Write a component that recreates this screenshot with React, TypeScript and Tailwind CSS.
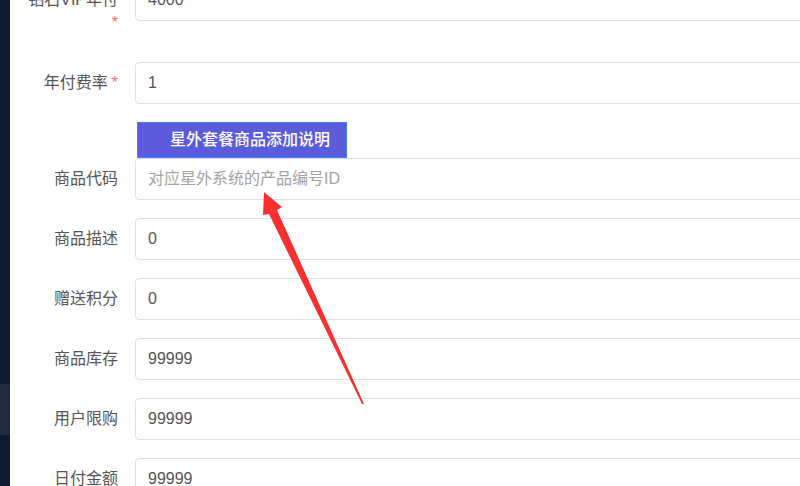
import React from "react";

const font = { fontFamily: '"Liberation Sans", "Noto Sans CJK SC", sans-serif' };

function Field({ value, placeholder }: { value?: string; placeholder?: string }) {
  return (
    <input
      readOnly
      value={value ?? ""}
      placeholder={placeholder}
      className="h-[42px] flex-1 mr-[-10px] rounded-[4px] border border-[#dcdfe6] bg-white pl-[12px] text-[16px] text-[#555] outline-none placeholder:text-[#a3a3a3]"
      style={font}
    />
  );
}

function Row({ label, star, value, placeholder }: { label: string; star?: boolean; value?: string; placeholder?: string }) {
  return (
    <div className="flex items-center mb-[18px]">
      <div className="w-[125px] pr-[17px] text-right text-[16px] text-[#555] shrink-0">
        {label}
        {star && <span className="ml-[4px] text-[#f56c6c]">*</span>}
      </div>
      <Field value={value} placeholder={placeholder} />
    </div>
  );
}

export default function App() {
  return (
    <div className="w-[800px] h-[486px] overflow-hidden flex bg-white" style={font}>
      <div className="w-[10px] shrink-0 bg-[#0e1a31] flex flex-col">
        <div className="h-[384px]" />
        <div className="h-[51px] bg-[#1f2a3f]" />
      </div>
      <div className="relative flex-1 min-w-0">
        <div className="-mt-[21px]">
          <div className="flex items-start h-[65px] mb-[18px]">
            <div className="w-[125px] pr-[17px] pt-[9px] text-right text-[16px] leading-[23px] text-[#555] shrink-0">
              钻石VIP年付
              <br />
              <span className="text-[#f56c6c]">*</span>
            </div>
            <Field value="4000" />
          </div>
          <Row label="年付费率" star value="1" />
          <div className="flex ml-[127px]">
            <div className="w-[210px] h-[36px] flex items-center justify-center bg-[#5b5bdc] border border-[#3d7ff5] pl-[16px] text-[16px] font-medium text-white">
              星外套餐商品添加说明
            </div>
          </div>
          <Row label="商品代码" placeholder="对应星外系统的产品编号ID" />
          <Row label="商品描述" value="0" />
          <Row label="赠送积分" value="0" />
          <Row label="商品库存" value="99999" />
          <Row label="用户限购" value="99999" />
          <Row label="日付金额" value="99999" />
        </div>
        <svg
          className="absolute left-[-10px] top-0 pointer-events-none"
          width="800"
          height="486"
          viewBox="0 0 800 486"
        >
          <polygon
            points="264,192 282,207 277,210 364,404 362,404 269,214 263,215"
            fill="#f5302f"
          />
        </svg>
      </div>
    </div>
  );
}
